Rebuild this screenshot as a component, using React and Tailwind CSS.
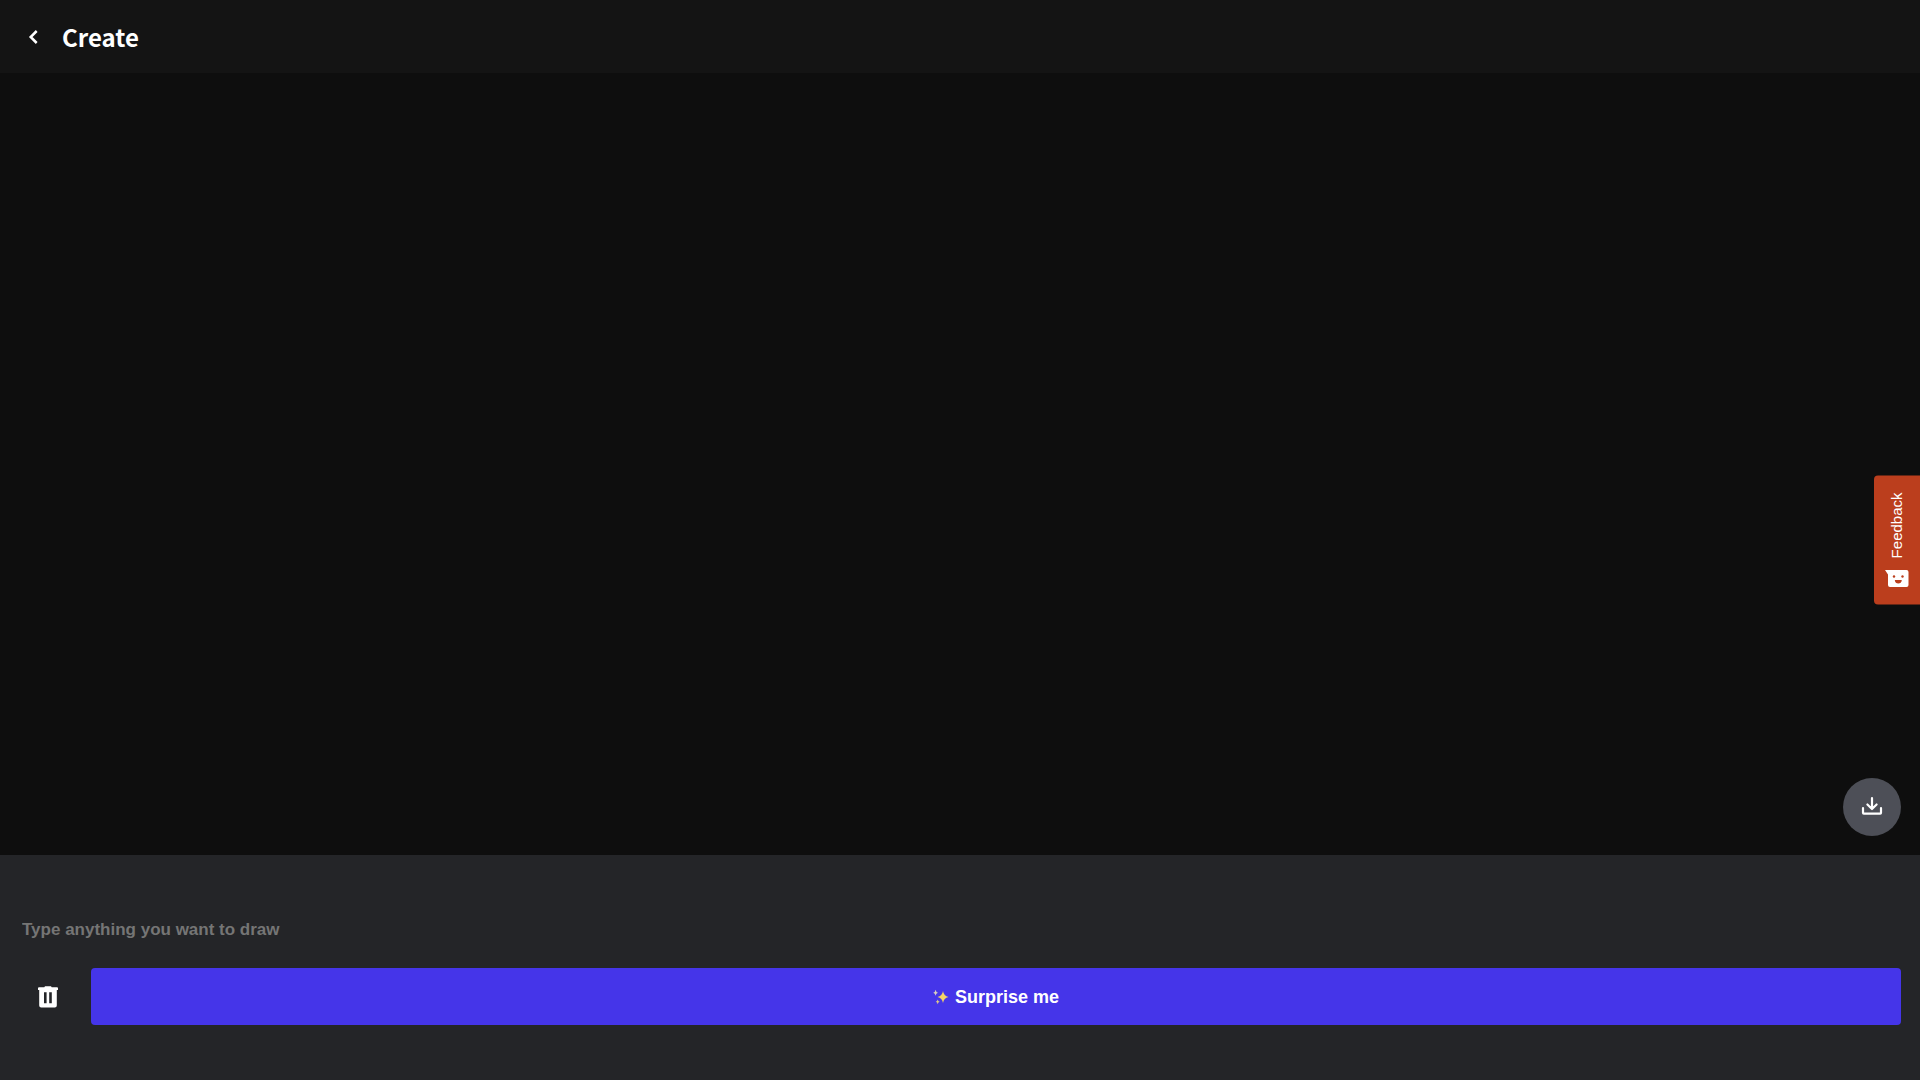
import React, { useState } from "react";

const BackIcon = () => (
  <svg viewBox="0 0 10 14" className="w-[10px] h-[14px]" fill="none" aria-hidden="true">
    <path
      d="M8.7 1 2.7 7l6 6"
      stroke="white"
      strokeWidth="2.5"
      strokeLinejoin="miter"
    />
  </svg>
);

const DownloadIcon = () => (
  <svg viewBox="0 0 22 18" className="w-[22px] h-[18px]" fill="none" aria-hidden="true">
    <path
      d="M11 1.2v10.5M6.4 7.5 11 12l4.6-4.5M2 11.2v4.6c0 .5.3.8.8.8h16.4c.5 0 .8-.3.8-.8v-4.6"
      stroke="white"
      strokeWidth="2.2"
      strokeLinecap="round"
      strokeLinejoin="round"
    />
  </svg>
);

const TrashIcon = () => (
  <svg viewBox="0 0 20 22" className="w-5 h-[22px]" fill="white" aria-hidden="true">
    <path
      fillRule="evenodd"
      d="M6.3 1.2 7 .3h6l.7.9H19a1 1 0 0 1 1 1V4h-1.2v15.6a2 2 0 0 1-2 2H3.2a2 2 0 0 1-2-2V4H0V2.2a1 1 0 0 1 1-1ZM6 6.3v10.9h2.6V6.3Zm5.2 0v10.9h2.6V6.3Z"
    />
  </svg>
);

const SparklesIcon = () => (
  <svg viewBox="0 0 16 16" className="w-4 h-4" aria-hidden="true">
    <path fill="#f5d565" d="M10 2q.8 5.2 5.5 6-4.7.8-5.5 6-.8-5.2-5.5-6 4.7-.8 5.5-6Z" />
    <path fill="#d9cfc0" d="M2.6.8q.4 2.6 2.4 3-2 .4-2.4 3-.4-2.6-2.4-3 2-.4 2.4-3Z" />
    <path fill="#dcc68a" d="M4.7 10.4q.4 2 2 2.4-1.6.4-2 2.4-.4-2-2-2.4 1.6-.4 2-2.4Z" />
  </svg>
);

const FeedbackIcon = () => (
  <svg viewBox="0 0 24 18" className="w-6 h-[18px]" aria-hidden="true">
    <path fill="white" d="M0 .5h21.5a2 2 0 0 1 2 2v13a2 2 0 0 1-2 2H5a2 2 0 0 1-2-2V5Z" />
    <circle cx="9" cy="7" r="1.2" fill="#bb3e1d" />
    <circle cx="17.5" cy="7" r="1.2" fill="#bb3e1d" />
    <path fill="#bb3e1d" d="M9.8 10.5h7c0 4.8-7 4.8-7 0Z" />
  </svg>
);

const App = () => {
  const [prompt, setPrompt] = useState("");

  return (
    <div className="min-h-screen flex flex-col bg-[#0e0e0e] text-white font-['Liberation_Sans',Arial,sans-serif]">
      <header className="flex items-center gap-6 h-[73px] px-7 bg-[#141414]">
        <button type="button" aria-label="Back" className="p-1 -m-1">
          <BackIcon />
        </button>
        <h1 className="text-2xl font-bold font-['Noto_Sans_CJK_SC',sans-serif]">
          Create
        </h1>
      </header>

      <main className="flex-1 flex items-end justify-end p-[19px]">
        <button
          type="button"
          aria-label="Download"
          className="w-[58px] h-[58px] pb-0.5 rounded-full bg-[#4d4f57] flex items-center justify-center"
        >
          <DownloadIcon />
        </button>
      </main>

      <footer className="flex flex-col gap-5 bg-[#242528] px-[19px] pt-[57px] pb-[55px]">
        <input
          type="text"
          aria-label="Prompt"
          placeholder="Type anything you want to draw"
          value={prompt}
          onChange={(e) => setPrompt(e.target.value)}
          className="w-full h-9 px-[3px] text-[17px] font-bold text-white placeholder:text-[#757575] outline-none"
        />
        <div className="flex">
          <button
            type="button"
            aria-label="Clear"
            onClick={() => setPrompt("")}
            className="w-[72px] h-[57px] pr-3.5 flex items-center justify-center"
          >
            <TrashIcon />
          </button>
          <button
            type="button"
            className="flex-1 h-[57px] rounded bg-[#4535e9] flex items-center justify-center gap-[6px] text-lg font-bold"
          >
            <SparklesIcon />
            Surprise me
          </button>
        </div>
      </footer>

      <button
        type="button"
        className="fixed right-0 top-1/2 -translate-y-1/2 w-[46px] h-[129px] rounded-l bg-[#bb3e1d] flex flex-col items-center justify-center gap-3"
      >
        <span className="[writing-mode:vertical-rl] rotate-180 text-[15px] leading-4">
          Feedback
        </span>
        <FeedbackIcon />
      </button>
    </div>
  );
};

export default App;
